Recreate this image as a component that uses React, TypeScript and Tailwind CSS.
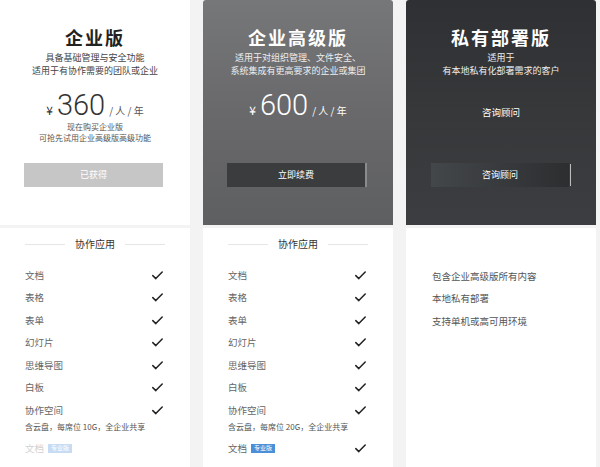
import React from "react";

const Check = () => (
  <svg width="11" height="9" viewBox="0 0 11 9" fill="none">
    <path d="M0.8 4.6 L3.8 7.6 L10.2 1" stroke="#222" strokeWidth="1.5" strokeLinecap="round" strokeLinejoin="round" />
  </svg>
);

const Badge = () => (
  <span className="ml-[4px] inline-flex h-[9px] items-center bg-[#4a8fd8] px-[3px] text-[6px] leading-none text-white">专业版</span>
);

const features = ["文档", "表格", "表单", "幻灯片", "思维导图", "白板"];

function FeatureList({ space, faded }: { space: string; faded: boolean }) {
  return (
    <div className="flex flex-1 flex-col bg-white px-[25px] pt-[9px]">
      <div className="flex items-center gap-[10px]">
        <div className="h-px flex-1 bg-[#e6e6e6]" />
        <div className="text-[10px] leading-[14px] text-[#333]">协作应用</div>
        <div className="h-px flex-1 bg-[#e6e6e6]" />
      </div>
      <div className="mt-[12.75px] flex flex-col">
        {features.map((f) => (
          <div key={f} className="flex h-[22.5px] items-center justify-between pr-[2px] text-[9.5px] text-[#666]">
            <span>{f}</span>
            <Check />
          </div>
        ))}
        <div className="flex h-[22.5px] items-center justify-between pr-[2px] text-[9.5px] text-[#666]">
          <span>协作空间</span>
          <Check />
        </div>
        <div className="text-[8px] leading-[12px] text-[#555]">{space}</div>
        <div className={"mt-[3.75px] flex h-[22.5px] items-center justify-between pr-[2px] text-[9.5px] text-[#666] " + (faded ? "opacity-30" : "")}>
          <span className="flex items-center">
            文档
            <Badge />
          </span>
          {faded ? null : <Check />}
        </div>
      </div>
    </div>
  );
}

export default function App() {
  return (
    <div
      className="flex h-[467px] w-[600px] gap-[13px] overflow-hidden bg-[#f3f3f3]"
      style={{ fontFamily: '"Noto Sans CJK SC", "Noto Sans", sans-serif' }}
    >
      {/* Card 1 */}
      <div className="flex w-[190px] flex-col gap-[3px]">
        <div className="flex h-[225px] flex-col items-center bg-white pt-[25px] text-center">
          <div className="text-[18px] font-semibold leading-[24px] tracking-[2px] text-[#222]">企业版</div>
          <div className="mt-[2px] text-[9px] leading-[13px] text-[#444]">
            <div>具备基础管理与安全功能</div>
            <div>适用于有协作需要的团队或企业</div>
          </div>
          <div className="mt-[12px] flex h-[32px] items-baseline text-[#333]">
            <span className="mr-[4px] text-[12px]">¥</span>
            <span className="text-[29px] font-light leading-[32px]" style={{ fontFamily: 'Roboto, "Liberation Sans", sans-serif' }}>360</span>
            <span className="ml-[4px] text-[10px] text-[#555]">/ 人 / 年</span>
          </div>
          <div className="text-[8px] leading-[11px] text-[#555]">
            <div>现在购买企业版</div>
            <div>可抢先试用企业高级版高级功能</div>
          </div>
          <div className="mb-[38px] mr-[3px] mt-auto flex h-[24px] w-[139px] items-center justify-center bg-[#c6c6c6] text-[9px] text-white">已获得</div>
        </div>
        <FeatureList space="含云盘，每席位 10G，全企业共享" faded={true} />
      </div>

      {/* Card 2 */}
      <div className="flex w-[190px] flex-col gap-[3px]">
        <div className="flex h-[225px] flex-col items-center rounded-t-[3px] bg-gradient-to-b from-[#767779] via-[#69696b] to-[#5e5f61] pt-[25px] text-center">
          <div className="text-[18px] font-semibold leading-[24px] tracking-[2px] text-white">企业高级版</div>
          <div className="mt-[2px] text-[9px] leading-[13px] text-[#eee]">
            <div>适用于对组织管理、文件安全、</div>
            <div>系统集成有更高要求的企业或集团</div>
          </div>
          <div className="mt-[12px] flex h-[32px] items-baseline text-white">
            <span className="mr-[4px] text-[12px]">¥</span>
            <span className="text-[29px] font-light leading-[32px]" style={{ fontFamily: 'Roboto, "Liberation Sans", sans-serif' }}>600</span>
            <span className="ml-[4px] text-[10px]">/ 人 / 年</span>
          </div>
          <div className="mb-[38px] mr-[2px] mt-auto flex h-[24px] w-[140px] items-center justify-center border-r-2 border-[#8a8b8d] bg-[#3b3c3e] text-[9px] text-white">立即续费</div>
        </div>
        <FeatureList space="含云盘，每席位 20G，全企业共享" faded={false} />
      </div>

      {/* Card 3 */}
      <div className="flex w-[190px] flex-col gap-[3px]">
        <div className="flex h-[225px] flex-col items-center rounded-t-[3px] bg-gradient-to-b from-[#2e3033] via-[#36383a] to-[#3b3d40] pt-[25px] text-center">
          <div className="text-[18px] font-semibold leading-[24px] tracking-[2px] text-white">私有部署版</div>
          <div className="mt-[2px] text-[9px] leading-[13px] text-[#eee]">
            <div>适用于</div>
            <div>有本地私有化部署需求的客户</div>
          </div>
          <div className="mt-[27.5px] text-[9.5px] leading-[14px] text-white">咨询顾问</div>
          <div className="mb-[38px] mt-auto flex h-[24px] items-center">
            <div className="flex h-[24px] w-[138px] items-center justify-center bg-gradient-to-r from-[#44474a] to-[#2c2e30] text-[9px] text-white">咨询顾问</div>
            <div className="ml-[1px] h-[22px] w-px bg-[#bdbdbd]" />
          </div>
        </div>
        <div className="flex flex-1 flex-col bg-white px-[26px] pt-[36.75px]">
          {["包含企业高级版所有内容", "本地私有部署", "支持单机或高可用环境"].map((t) => (
            <div key={t} className="flex h-[22.5px] items-center text-[9.5px] text-[#555]">{t}</div>
          ))}
        </div>
      </div>
    </div>
  );
}
